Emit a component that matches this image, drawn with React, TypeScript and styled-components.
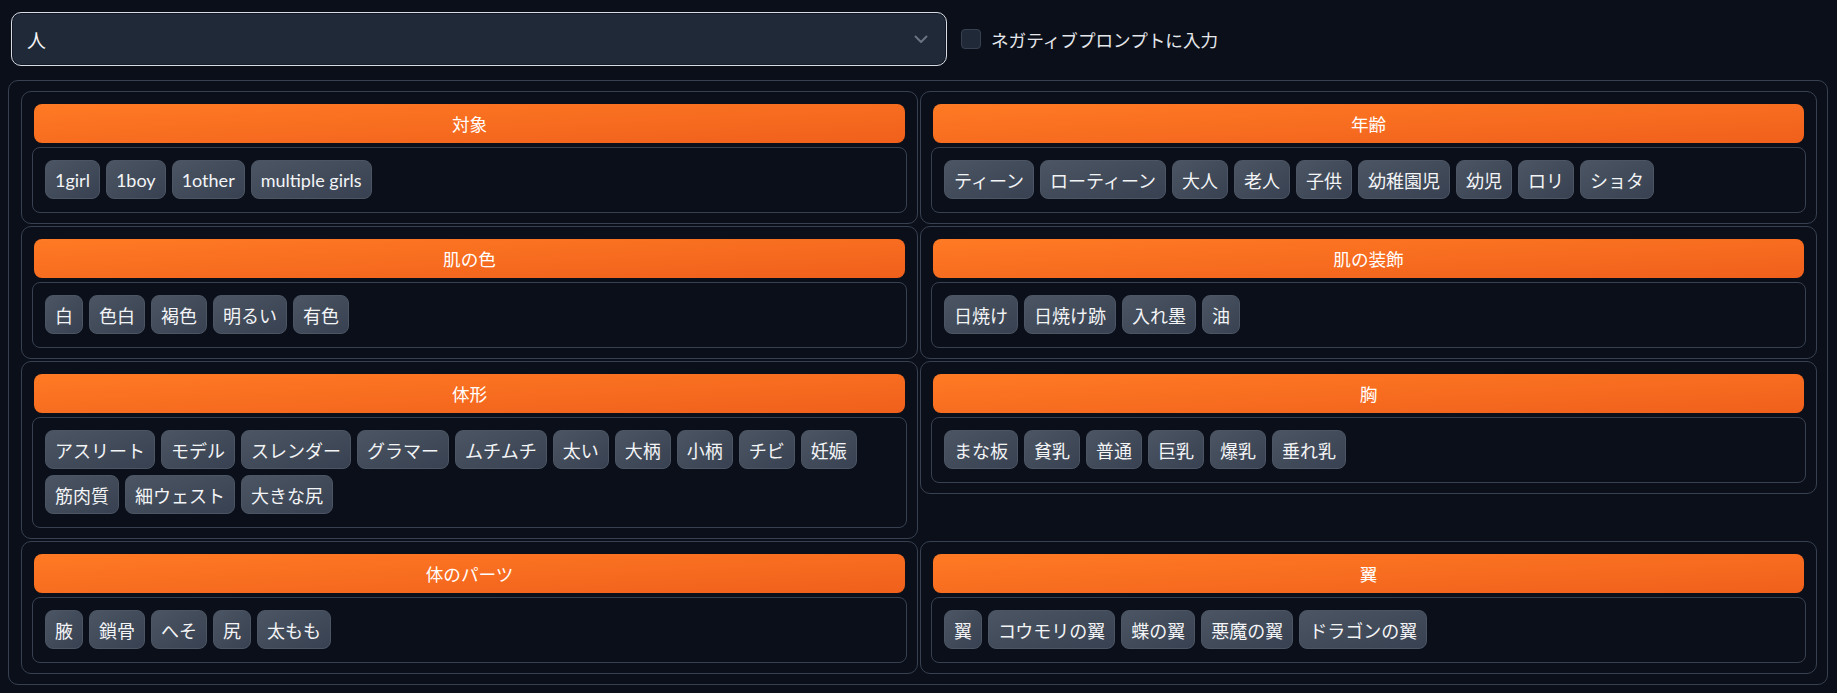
import styled, { createGlobalStyle } from 'styled-components'

const GlobalStyle = createGlobalStyle`
  html, body {
    margin: 0;
    background: #0b0f19;
  }
  body {
    font-family: Lato, 'Noto Sans CJK JP', sans-serif;
    color: #e5e7eb;
  }
`

const Page = styled.div`
  padding: 0 9px 0 8px;
`

const TopRow = styled.div`
  display: flex;
  align-items: center;
  gap: 14px;
  padding: 12px 0 0 3px;
  margin-bottom: 14px;
`

const Dropdown = styled.div`
  box-sizing: border-box;
  width: 936px;
  height: 54px;
  display: flex;
  align-items: center;
  justify-content: space-between;
  padding: 0 18px 0 15px;
  background: #1f2937;
  border: 1px solid #d9dde3;
  border-radius: 10px;
  box-shadow: inset 0 0 0 1px #111827;
  font-size: 19px;
  color: #f3f4f6;
`

const CheckLabel = styled.label`
  display: flex;
  align-items: center;
  gap: 10px;
  font-size: 17.6px;
  color: #e5e7eb;
`

const CheckBox = styled.span`
  box-sizing: border-box;
  width: 20px;
  height: 20px;
  border-radius: 4px;
  background: #1f2937;
  border: 1px solid #374151;
`

const Form = styled.div`
  border: 1px solid #374151;
  border-radius: 10px;
  padding: 10px 10px 10px 12px;
`

const Grid = styled.div`
  display: grid;
  grid-template-columns: 1fr 1fr;
  column-gap: 2px;
  row-gap: 2px;
  align-items: start;
`

const Block = styled.div`
  border: 1px solid #374151;
  border-radius: 10px;
  padding: 10px;
  display: flex;
  flex-direction: column;
  gap: 4px;
`

const Header = styled.div`
  margin: 2px 2px 0;
  height: 39px;
  border-radius: 8px;
  background: linear-gradient(to bottom right, #ff7a24, #f0601c);
  display: flex;
  align-items: center;
  justify-content: center;
  color: #ffffff;
  font-size: 17.6px;
`

const ChipBox = styled.div`
  border: 1px solid #374151;
  border-radius: 8px;
  padding: 12px 12px 13px;
  display: flex;
  flex-wrap: wrap;
  gap: 6px;
`

const Chip = styled.span`
  box-sizing: border-box;
  height: 39px;
  padding: 0 9px;
  display: inline-flex;
  align-items: center;
  border: 1px solid #4b5563;
  border-radius: 8px;
  background: linear-gradient(to bottom right, #4b5563, #374151);
  color: #f3f4f6;
  font-size: 18px;
  white-space: nowrap;
`

const Chevron = () => (
  <svg width="14" height="9" viewBox="0 0 14 9" fill="none">
    <polyline points="1.5 1.5 7 7 12.5 1.5" stroke="#6b7280" strokeWidth="2" strokeLinecap="round" strokeLinejoin="round" />
  </svg>
)

const groups: { title: string; tags: string[] }[] = [
  { title: '対象', tags: ['1girl', '1boy', '1other', 'multiple girls'] },
  { title: '年齢', tags: ['ティーン', 'ローティーン', '大人', '老人', '子供', '幼稚園児', '幼児', 'ロリ', 'ショタ'] },
  { title: '肌の色', tags: ['白', '色白', '褐色', '明るい', '有色'] },
  { title: '肌の装飾', tags: ['日焼け', '日焼け跡', '入れ墨', '油'] },
  {
    title: '体形',
    tags: ['アスリート', 'モデル', 'スレンダー', 'グラマー', 'ムチムチ', '太い', '大柄', '小柄', 'チビ', '妊娠', '筋肉質', '細ウェスト', '大きな尻'],
  },
  { title: '胸', tags: ['まな板', '貧乳', '普通', '巨乳', '爆乳', '垂れ乳'] },
  { title: '体のパーツ', tags: ['腋', '鎖骨', 'へそ', '尻', '太もも'] },
  { title: '翼', tags: ['翼', 'コウモリの翼', '蝶の翼', '悪魔の翼', 'ドラゴンの翼'] },
]

export default function App() {
  return (
    <Page>
      <GlobalStyle />
      <TopRow>
        <Dropdown>
          <span>人</span>
          <Chevron />
        </Dropdown>
        <CheckLabel>
          <CheckBox />
          ネガティブプロンプトに入力
        </CheckLabel>
      </TopRow>
      <Form>
        <Grid>
          {groups.map((g) => (
            <Block key={g.title}>
              <Header>{g.title}</Header>
              <ChipBox>
                {g.tags.map((t) => (
                  <Chip key={t}>{t}</Chip>
                ))}
              </ChipBox>
            </Block>
          ))}
        </Grid>
      </Form>
    </Page>
  )
}
